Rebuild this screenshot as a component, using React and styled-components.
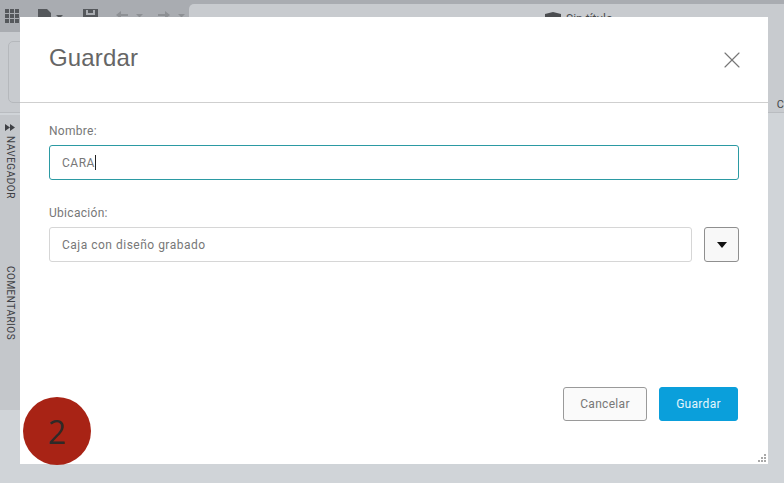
import styled, { createGlobalStyle } from "styled-components";
import { X } from "lucide-react";

const GlobalStyle = createGlobalStyle`
  html, body {
    margin: 0;
    padding: 0;
    overflow: hidden;
    background: #d0d4d8;
  }
  * {
    box-sizing: border-box;
  }
`;

const Shell = styled.div`
  position: relative;
  width: 784px;
  height: 483px;
  overflow: hidden;
  background: #d0d4d8;
  font-family: "Roboto", "Liberation Sans", sans-serif;
`;

const TopBar = styled.div`
  display: flex;
  align-items: flex-end;
  height: 32px;
  padding: 4px 0 0 5px;
  background: #a9acb1;
`;

const ToolIcons = styled.div`
  display: flex;
  align-items: flex-start;
  width: 184px;
  height: 28px;
  padding-top: 5px;
`;

const ToolSlot = styled.span`
  display: flex;
  margin-left: ${(p) => p.$left}px;
`;

const Tab = styled.div`
  flex: 1;
  display: flex;
  gap: 5px;
  height: 28px;
  padding: 8px 0 0 356px;
  background: #c8cbcf;
  border-radius: 5px 0 0 0;
  font-size: 12px;
  color: #4b4d50;
`;

const Ribbon = styled.div`
  display: flex;
  justify-content: space-between;
  align-items: flex-end;
  height: 81px;
  padding: 10px 0 1px 8px;
  background: #c8cbcf;
  border-bottom: 1px solid #b9bcc0;
`;

const RibbonBox = styled.div`
  width: 30px;
  height: 62px;
  margin-bottom: 8px;
  border: 1px solid #b5b8bc;
  border-radius: 5px;
`;

const RibbonLabel = styled.span`
  font-size: 11px;
  color: #45474a;
`;

const SideBar = styled.div`
  display: flex;
  flex-direction: column;
  align-items: center;
  width: 20px;
  height: 295px;
  margin-top: 2px;
  padding-top: 9px;
  background: #c4c7cb;
`;

const SideText = styled.span`
  writing-mode: vertical-rl;
  font-size: 10px;
  line-height: 12px;
  letter-spacing: 0.5px;
  color: #3f4145;
  margin-top: ${(p) => p.$top}px;
`;

const Modal = styled.div`
  position: absolute;
  left: 20px;
  top: 17px;
  width: 748px;
  height: 447px;
  display: flex;
  flex-direction: column;
  background: #fff;
`;

const Header = styled.div`
  display: flex;
  align-items: center;
  justify-content: space-between;
  height: 86px;
  padding: 0 22px 0 29px;
  border-bottom: 1px solid #cfcfcf;
`;

const Title = styled.h2`
  margin: 0 0 4px;
  font-family: "Liberation Sans", Arial, sans-serif;
  font-size: 24px;
  font-weight: 400;
  letter-spacing: 0.15px;
  color: #666;
`;

const CloseButton = styled.button`
  display: flex;
  padding: 0;
  margin-top: 1px;
  border: none;
  background: none;
  color: #777;
`;

const Body = styled.div`
  flex: 1;
  display: flex;
  flex-direction: column;
  padding: 21px 29px 0;
`;

const Label = styled.label`
  height: 21px;
  font-size: 12px;
  line-height: 15px;
  letter-spacing: 0.3px;
  color: #777;
`;

const Row = styled.div`
  display: flex;
  gap: 12px;
  margin-bottom: 26px;
`;

const Field = styled.div`
  flex: 1;
  display: flex;
  align-items: center;
  height: 35px;
  padding-left: 12px;
  border: 1px solid ${(p) => (p.$active ? "#2b9aa3" : "#d6d6d6")};
  border-radius: 3px;
  font-size: 12px;
  letter-spacing: 0.5px;
  color: #777;
`;

const Caret = styled.span`
  width: 1px;
  height: 15px;
  background: #222;
`;

const DropButton = styled.button`
  display: flex;
  align-items: center;
  justify-content: center;
  width: 35px;
  height: 35px;
  padding: 0;
  background: #f8f8f8;
  border: 1px solid #8f8f8f;
  border-radius: 3px;
`;

const Footer = styled.div`
  display: flex;
  justify-content: flex-end;
  gap: 12px;
  padding: 0 30px 43px;
`;

const Button = styled.button`
  height: 34px;
  width: ${(p) => (p.$primary ? "79px" : "84px")};
  font-family: inherit;
  font-size: 12px;
  letter-spacing: 0.3px;
  color: ${(p) => (p.$primary ? "#e4f6fc" : "#777")};
  background: ${(p) => (p.$primary ? "#0a9fdb" : "#fafafa")};
  border: 1px solid ${(p) => (p.$primary ? "#0a9fdb" : "#9a9a9a")};
  border-radius: 3px;
`;

const Grip = styled.svg`
  position: absolute;
  right: 1px;
  bottom: 1px;
`;

const Badge = styled.div`
  position: absolute;
  left: 23px;
  top: 397px;
  display: flex;
  align-items: center;
  justify-content: center;
  width: 68px;
  height: 68px;
  border-radius: 50%;
  background: #a82315;
  font-family: "Open Sans", sans-serif;
  font-size: 32px;
  color: #2f2a28;
`;

const GridIcon = () => (
  <svg width="14" height="14" viewBox="0 0 14 14" fill="#55585c">
    {[0, 5, 10].map((y) =>
      [0, 5, 10].map((x) => <rect key={`${x}-${y}`} x={x} y={y} width="4" height="4" />)
    )}
  </svg>
);

const FileIcon = () => (
  <svg width="26" height="10" viewBox="0 0 26 10" fill="#55585c">
    <path d="M0 0h9l4 4v6H0z" />
    <path d="M18 6h7l-3.5 3.5z" />
  </svg>
);

const SaveIcon = () => (
  <svg width="15" height="10" viewBox="0 0 15 10" fill="#55585c">
    <path d="M0 0h15v10H0zM3 1v5h9V1h-2v3H5V1z" fillRule="evenodd" />
  </svg>
);

const ArrowIcon = ({ flip }) => (
  <svg width="27" height="10" viewBox="0 0 27 10" fill="#8d9094">
    <path d={flip ? "M0 5h7V2l5 4-5 4V7H0z" : "M12 5H5V2L0 6l5 4V7h7z"} />
    <path d="M20 5h7l-3.5 3.5z" />
  </svg>
);

export default function App() {
  return (
    <Shell>
      <GlobalStyle />
      <TopBar>
        <ToolIcons>
          <GridIcon />
          <ToolSlot $left={19}>
            <FileIcon />
          </ToolSlot>
          <ToolSlot $left={19}>
            <SaveIcon />
          </ToolSlot>
          <ToolSlot $left={18}>
            <ArrowIcon />
          </ToolSlot>
          <ToolSlot $left={15}>
            <ArrowIcon flip />
          </ToolSlot>
        </ToolIcons>
        <Tab>
          <svg width="16" height="10" viewBox="0 0 16 10" fill="#4b4d50">
            <path d="M0 2l8-2 8 2v8H0z" />
          </svg>
          Sin título
        </Tab>
      </TopBar>
      <Ribbon>
        <RibbonBox />
        <RibbonLabel>C</RibbonLabel>
      </Ribbon>
      <SideBar>
        <svg width="10" height="7" viewBox="0 0 10 7" fill="#3f4145">
          <path d="M0 0l5 3.5L0 7zM5 0l5 3.5L5 7z" />
        </svg>
        <SideText $top={5}>NAVEGADOR</SideText>
        <SideText $top={67}>COMENTARIOS</SideText>
      </SideBar>

      <Modal>
        <Header>
          <Title>Guardar</Title>
          <CloseButton aria-label="Cerrar">
            <X size={28} strokeWidth={1} />
          </CloseButton>
        </Header>
        <Body>
          <Label>Nombre:</Label>
          <Row>
            <Field $active>
              CARA
              <Caret />
            </Field>
          </Row>
          <Label>Ubicación:</Label>
          <Row>
            <Field>Caja con diseño grabado</Field>
            <DropButton aria-label="Abrir">
              <svg width="10" height="6" viewBox="0 0 10 6" fill="#111">
                <path d="M0 0h10L5 6z" />
              </svg>
            </DropButton>
          </Row>
        </Body>
        <Footer>
          <Button>Cancelar</Button>
          <Button $primary>Guardar</Button>
        </Footer>
        <Grip width="9" height="9" viewBox="0 0 9 9" fill="#a8a8a8">
          <rect x="6" y="0" width="2" height="2" />
          <rect x="3" y="3" width="2" height="2" />
          <rect x="6" y="3" width="2" height="2" />
          <rect x="0" y="6" width="2" height="2" />
          <rect x="3" y="6" width="2" height="2" />
          <rect x="6" y="6" width="2" height="2" />
        </Grip>
      </Modal>

      <Badge>2</Badge>
    </Shell>
  );
}
